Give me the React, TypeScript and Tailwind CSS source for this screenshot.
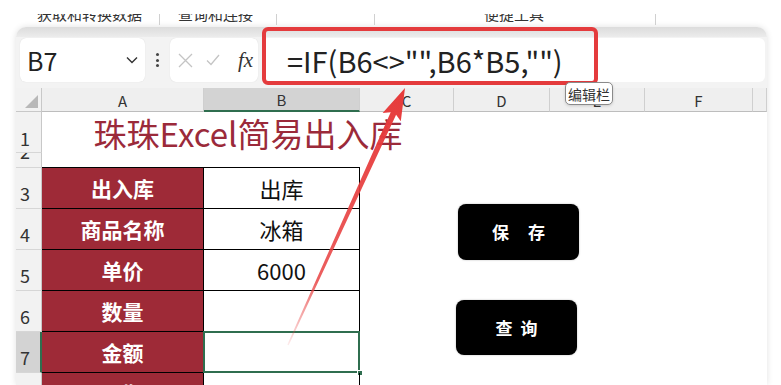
import React from 'react';

const CELL_RED = 'bg-[#9e2a37]';

const rows = [
  { n: 3, label: '出入库', value: '出库' },
  { n: 4, label: '商品名称', value: '冰箱' },
  { n: 5, label: '单价', value: '6000' },
  { n: 6, label: '数量', value: '' },
  { n: 7, label: '金额', value: '', selected: true },
  { n: 8, label: '日期', value: '' },
];

const Clip = ({ className, children }: { className: string; children: React.ReactNode }) => (
  <div className={`h-[9px] overflow-hidden shrink-0 ${className}`}>
    <div className="mt-[-10px] leading-[20px] whitespace-nowrap">{children}</div>
  </div>
);

const Sep = ({ className }: { className: string }) => (
  <div className={`w-px h-[11px] bg-[#d0d0d0] shrink-0 ${className}`} />
);

const RibbonStrip = () => (
  <div className="h-[27px] pt-[14px] flex items-start text-[15px] text-[#333]">
    <Clip className="ml-[37px] w-[105px]">获取和转换数据</Clip>
    <Sep className="ml-[17px]" />
    <Clip className="ml-[18px] w-[75px]">查询和连接</Clip>
    <Sep className="ml-[23px]" />
    <Sep className="ml-[97px]" />
    <Clip className="ml-[109px] w-[61px]">便捷工具</Clip>
    <Sep className="ml-[110px]" />
  </div>
);

const FormulaBar = () => (
  <div className="h-[51px] bg-[#f3f3f3] flex items-start pt-[1px] pl-[4px] pr-[2px]">
    <div className="w-[125px] h-[44px] bg-white rounded-[6px] flex items-center justify-between pl-[7px] pr-[7px] shadow-[0_0_1px_rgba(0,0,0,0.15)]">
      <span className="text-[25px] leading-none text-[#222]">B7</span>
      <svg width="12" height="8" viewBox="0 0 12 8">
        <path d="M1 1.5 L6 6.5 L11 1.5" fill="none" stroke="#333" strokeWidth="1.4" />
      </svg>
    </div>
    <div className="w-[25px] h-[44px] flex flex-col items-center justify-center gap-[2.5px]">
      <div className="w-[3px] h-[3px] rounded-full bg-[#444]" />
      <div className="w-[3px] h-[3px] rounded-full bg-[#444]" />
      <div className="w-[3px] h-[3px] rounded-full bg-[#444]" />
    </div>
    <div className="w-[88px] h-[44px] bg-white rounded-[6px] flex items-center pl-[8px] shadow-[0_0_1px_rgba(0,0,0,0.15)]">
      <svg width="15" height="15" viewBox="0 0 15 15">
        <path d="M1 1 L14 14 M14 1 L1 14" stroke="#c4c4c4" strokeWidth="1.3" />
      </svg>
      <svg width="14" height="12" viewBox="0 0 14 12" className="ml-[13px]">
        <path d="M1 6.5 L5 10.5 L13 1" fill="none" stroke="#c4c4c4" strokeWidth="1.3" />
      </svg>
      <span className="ml-[18px] font-['Liberation_Serif',serif] italic text-[21px] leading-none text-[#333]">fx</span>
    </div>
    <div className="flex-1 h-[44px] ml-[4px] bg-white rounded-[6px] flex items-center pl-[25px]">
      <span className="text-[29px] leading-none text-[#222] whitespace-nowrap">=IF(B6&lt;&gt;"",B6*B5,"")</span>
    </div>
  </div>
);

const colHeads = [
  { l: 'A', w: 'w-[162px]' },
  { l: 'B', w: 'w-[156px]', sel: true },
  { l: 'C', w: 'w-[94px]' },
  { l: 'D', w: 'w-[96px]' },
  { l: 'E', w: 'w-[95px]' },
  { l: 'F', w: 'w-[108px]' },
  { l: '', w: 'w-[14px]' },
];

const RowHead = ({ n, h, sel, pb }: { n: number; h: string; sel?: boolean; pb: string }) => (
  <div
    className={`w-[26px] shrink-0 ${h} ${pb} overflow-hidden flex items-end pl-[4px] text-[18px] leading-none text-[#333] border-b border-[#d6d6d6] ${
      sel ? 'bg-[#d3d3d3] border-r-2 border-r-[#2f6e4f]' : 'bg-[#f2f2f2] border-r border-r-[#c8c8c8]'
    }`}
  >
    {n}
  </div>
);

const Sheet = () => (
  <div className="h-[297px] overflow-hidden bg-white">
    <div className="flex h-[24px]">
      <div className="w-[26px] shrink-0 bg-[#f2f2f2] border-r border-b border-[#c8c8c8] flex items-end justify-end pr-[3px] pb-[3px]">
        <svg width="13" height="13" viewBox="0 0 13 13">
          <path d="M13 0 L13 13 L0 13 Z" fill="#b8b8b8" />
        </svg>
      </div>
      {colHeads.map((c) => (
        <div
          key={c.w + c.l}
          className={`${c.w} shrink-0 flex items-center justify-center pt-[3px] text-[15px] text-[#333] border-r border-r-[#cfcfcf] ${
            c.sel ? 'bg-[#d3d3d3] border-b-2 border-b-[#2f6e4f]' : 'bg-[#efefef] border-b border-b-[#bdbdbd]'
          }`}
        >
          {c.l}
        </div>
      ))}
    </div>
    <div className="flex">
      <RowHead n={1} h="h-[41px]" pb="pb-[5px]" />
      <div className="w-[412px] shrink-0 flex items-center justify-center pt-[1px] text-[33px] leading-none text-[#9b2a3a] whitespace-nowrap">
        珠珠Excel简易出入库
      </div>
    </div>
    <div className="flex">
      <RowHead n={2} h="h-[15px]" pb="pb-[7px]" />
      <div className="w-[318px] shrink-0 border-b border-black" />
    </div>
    {rows.map((r) => (
      <div key={r.n} className="flex h-[41px]">
        <RowHead n={r.n} h="h-[41px]" pb="pb-[6px]" sel={r.selected} />
        <div className={`w-[162px] shrink-0 ${CELL_RED} border-r border-b border-black flex items-center justify-center text-white font-bold text-[21px] leading-none`}>
          {r.label}
        </div>
        <div className="relative w-[156px] shrink-0 border-r border-b border-black flex items-center justify-center text-[22px] leading-none text-[#111]">
          {r.value}
          {r.selected && (
            <>
              <div className="absolute inset-[-1px] border-2 border-[#2f6e4f]" />
              <div className="absolute right-[-4px] bottom-[-4px] w-[6px] h-[6px] bg-[#2f6e4f] border border-white" />
            </>
          )}
        </div>
      </div>
    ))}
  </div>
);

export default function App() {
  return (
    <div className="relative w-[781px] h-[385px] overflow-hidden bg-white font-['Noto_Sans_CJK_SC',sans-serif] text-[#222]">
      <RibbonStrip />
      <div className="ml-[16px] w-[751px] h-[358px] rounded-t-[10px] shadow-[0_0_6px_rgba(0,0,0,0.12)] overflow-hidden bg-white flex flex-col">
        <div className="h-[10px] shrink-0 bg-gradient-to-b from-[#dcdcdc] to-[#ececec]" />
        <FormulaBar />
        <Sheet />
      </div>

      {/* floating buttons on the sheet */}
      <div className="absolute left-[458px] top-[204px] w-[121px] h-[56px] rounded-[8px] bg-black flex items-center justify-center gap-[19px] text-white font-bold text-[17px] shadow-[0_0_2px_rgba(0,0,0,0.3)]">
        <span>保</span>
        <span>存</span>
      </div>
      <div className="absolute left-[456px] top-[300px] w-[121px] h-[55px] rounded-[8px] bg-black flex items-center justify-center gap-[8px] text-white font-bold text-[17px] shadow-[0_0_2px_rgba(0,0,0,0.3)]">
        <span>查</span>
        <span>询</span>
      </div>

      {/* highlight box round the formula */}
      <div className="absolute left-[262px] top-[27px] w-[336px] h-[58px] border-4 border-[#e43b3d] rounded-[6px]" />

      {/* tooltip */}
      <div className="absolute left-[565px] top-[82px] w-[48px] h-[23px] bg-white border border-[#8a8a8a] rounded-[5px] flex items-center justify-center text-[14px] leading-none text-[#333] shadow-[0_1px_3px_rgba(0,0,0,0.15)]">
        编辑栏
      </div>

      {/* arrow */}
      <svg className="absolute left-0 top-0 pointer-events-none" width="781" height="385" viewBox="0 0 781 385">
        <defs>
          <linearGradient id="arr" x1="288" y1="345" x2="405" y2="88" gradientUnits="userSpaceOnUse">
            <stop offset="0" stopColor="#e84343" stopOpacity="0.1" />
            <stop offset="0.25" stopColor="#e84343" stopOpacity="0.85" />
            <stop offset="1" stopColor="#e63a3a" />
          </linearGradient>
        </defs>
        <polygon
          points="287.3,344.7 390.7,112.3 382.6,113.0 405,88 400.8,121.2 396.1,114.7 288.7,345.3"
          fill="url(#arr)"
        />
      </svg>
    </div>
  );
}
